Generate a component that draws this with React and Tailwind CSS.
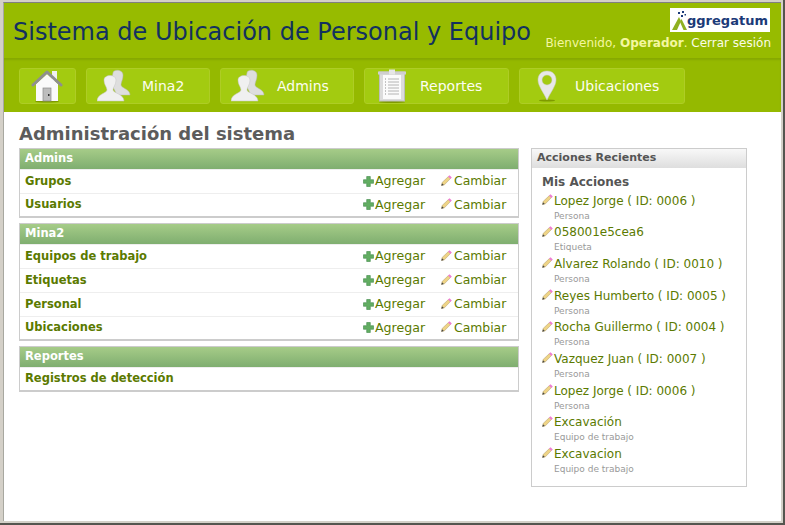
import React from 'react';

function HomeIcon() {
  return (
    <svg width="32" height="34" viewBox="0 0 32 34">
      <ellipse cx="16" cy="32.5" rx="12" ry="1" fill="#7f9a00" />
      <rect x="21" y="2" width="5" height="10" fill="#f0f0f0" />
      <path d="M5 15 L16 5 L27 15 V32 H5 Z" fill="#fafafa" />
      <path d="M2 16 L16 3 L30 16" fill="none" stroke="#8f8f8f" strokeWidth="3" strokeLinecap="round" strokeLinejoin="round" />
      <rect x="12" y="19" width="8" height="13" fill="#bdbdbd" stroke="#8a8a8a" strokeWidth="0.7" />
      <rect x="17" y="25" width="1.5" height="2" fill="#333333" />
    </svg>
  );
}

function UsersIcon() {
  return (
    <svg width="34" height="34" viewBox="0 0 34 34">
      <path d="M16 4 C16 0 26 0 26 6 C26 11 24 13 24 16 C24 19 33 20 33 26 H20 L14 14 Z" fill="#dedede" stroke="#b8b8b8" strokeWidth="0.5" />
      <path d="M7 11 C7 5 19 5 19 11 C19 16 16 18 16 21 C16 24 27 25 27 32 H0 C0 25 10 24 10 21 C10 18 7 16 7 11 Z" fill="#f0f0f0" stroke="#c4c4c4" strokeWidth="0.5" />
    </svg>
  );
}

function ClipboardIcon() {
  return (
    <svg width="28" height="34" viewBox="0 0 28 34">
      <ellipse cx="14" cy="33" rx="13" ry="1" fill="#7f9a00" />
      <rect x="1.5" y="3" width="25" height="29" fill="#dcdcdc" stroke="#bcbcbc" />
      <rect x="0" y="2.5" width="28" height="3" fill="#cfcfcf" />
      <rect x="5" y="6" width="18" height="24" fill="#fbfbfb" />
      <rect x="11" y="0.5" width="6" height="5" fill="#e6e6e6" />
      <path d="M10 10H21M10 13H21M10 16H21M10 19H21M10 22H21M10 25H21" stroke="#b4b4b4" strokeWidth="1" />
      <path d="M7 10H8M7 13H8M7 16H8M7 19H8M7 22H8M7 25H8" stroke="#8c8c8c" strokeWidth="1" />
    </svg>
  );
}

function PinIcon() {
  return (
    <svg width="20" height="32" viewBox="0 0 20 32">
      <ellipse cx="10" cy="30.5" rx="8" ry="1" fill="#7f9a00" />
      <path fillRule="evenodd" d="M10 1 C4 1 1 5 1 10 C1 16 7 23 10 30 C13 23 19 16 19 10 C19 5 16 1 10 1 Z M10 5 A5 5 0 1 1 10 15 A5 5 0 1 1 10 5 Z" fill="#e8e8e8" stroke="#cccccc" strokeWidth="0.5" />
    </svg>
  );
}

function AddIcon() {
  return (
    <svg width="11" height="11" viewBox="0 0 11 11" className="shrink-0">
      <path d="M3.7 0.5H7.3V3.7H10.5V7.3H7.3V10.5H3.7V7.3H0.5V3.7H3.7Z" fill="#62ad62" stroke="#3f8a4a" strokeWidth="0.6" />
    </svg>
  );
}

function PencilIcon() {
  return (
    <svg width="11" height="11" viewBox="0 0 11 11" className="shrink-0 -translate-y-[1px]">
      <path d="M0.6 10.4 L1.2 7.4 L7.4 1.6 L9.4 3.6 L3.4 9.8 Z" fill="#efd486" stroke="#b8a470" strokeWidth="0.6" />
      <path d="M7 1.6 L8.6 0.2 L10.8 2.4 L9.4 4 Z" fill="#ee7ed2" />
      <path d="M0.3 10.7 L1 8.2 L2.8 10 Z" fill="#444444" />
    </svg>
  );
}

function NavItem({ icon, label, widthClass, labelClass }) {
  return (
    <div className={`flex h-[36px] items-center rounded-[3px] border border-[#aecd25] bg-[#a3cb10] text-[14px] text-[#fdfdf0] ${widthClass}`}>
      <div className={`flex h-full items-center ${labelClass}`}>
        {icon}
        {label && <span>{label}</span>}
      </div>
    </div>
  );
}

function ModelRow({ name, actions = true }) {
  return (
    <div className="flex h-[24px] items-center border-t border-[#eeeeee] pl-[5px] first:border-t-0 last:h-[23px]">
      <span className="flex-1 text-[11.5px] font-bold text-[#5b7a00]">{name}</span>
      {actions && (
        <>
          <span className="flex w-[78px] items-center gap-[1px] text-[12.6px] text-[#5b7a00]">
            <AddIcon />
            Agregar
          </span>
          <span className="flex w-[77px] items-center gap-[2px] text-[12.4px] text-[#5b7a00]">
            <PencilIcon />
            Cambiar
          </span>
        </>
      )}
    </div>
  );
}

function ModelGroup({ title, rows, actions }) {
  return (
    <div className="border border-b-2 border-[#cccccc]">
      <div className="flex h-[20px] items-center bg-gradient-to-b from-[#a6cc88] to-[#7fae70] pl-[5px] text-[11.5px] font-bold text-white">
        {title}
      </div>
      {rows.map((name) => (
        <ModelRow key={name} name={name} actions={actions} />
      ))}
    </div>
  );
}

const recent = [
  ['Lopez Jorge ( ID: 0006 )', 'Persona'],
  ['058001e5cea6', 'Etiqueta'],
  ['Alvarez Rolando ( ID: 0010 )', 'Persona'],
  ['Reyes Humberto ( ID: 0005 )', 'Persona'],
  ['Rocha Guillermo ( ID: 0004 )', 'Persona'],
  ['Vazquez Juan ( ID: 0007 )', 'Persona'],
  ['Lopez Jorge ( ID: 0006 )', 'Persona'],
  ['Excavación', 'Equipo de trabajo'],
  ['Excavacion', 'Equipo de trabajo'],
];

export default function App() {
  return (
    <div className="h-[525px] w-[785px] overflow-hidden border-r-2 border-b-2 border-r-[#55554f] border-b-[#55554f] bg-[#d4d0c8] pt-[2px] pl-[3px] font-['DejaVu_Sans',sans-serif]">
      <div className="h-[519px] w-[778px] overflow-hidden border-t border-l border-t-[#808080] border-l-[#a8a8a0] bg-white">
        {/* Header */}
        <header className="flex h-[55px] justify-between bg-[#97bb00] pl-[9px] pr-[10px]">
          <h1 className="pt-[14px] text-[24px] leading-[30px] font-normal text-[#12315f]">
            Sistema de Ubicación de Personal y Equipo
          </h1>
          <div className="flex flex-col items-end pt-[5px]">
            <div className="mr-[1px] flex h-[24px] w-[100px] items-center bg-white pl-[2px]">
              <svg width="15" height="21" viewBox="0 0 15 21" className="shrink-0">
                <path d="M0 20 L7 7 L9 11 L5 20 Z" fill="#8fb020" />
                <path d="M8 12 L9.5 9 L15 20 H11.5 Z" fill="#8fb020" />
                <path d="M6 2h2v2h-2zM10 1h2v2h-2zM9 5h2v2h-2zM12.5 4h1.5v1.5h-1.5z" fill="#1b3a78" />
              </svg>
              <span className="text-[13px] leading-none font-bold text-[#1b3a78]">ggregatum</span>
            </div>
            <div className="mt-[2px] text-[12px] whitespace-nowrap text-[#f4f7a0]">
              Bienvenido, <strong className="font-bold">Operador</strong>. <span className="text-[#fbfde8]">Cerrar sesión</span>
            </div>
          </div>
        </header>

        {/* Nav */}
        <nav className="flex h-[54px] items-start gap-[10px] bg-[#95b900] pt-[10px] pl-[15px] shadow-[inset_0_2px_2px_#86a800]">
          <NavItem icon={<HomeIcon />} widthClass="w-[57px]" labelClass="pl-[11px]" />
          <NavItem icon={<UsersIcon />} label="Mina2" widthClass="w-[124px]" labelClass="gap-[11px] pl-[10px]" />
          <NavItem icon={<UsersIcon />} label="Admins" widthClass="w-[134px]" labelClass="gap-[12px] pl-[10px]" />
          <NavItem icon={<ClipboardIcon />} label="Reportes" widthClass="w-[145px]" labelClass="gap-[14px] pl-[13px]" />
          <NavItem icon={<PinIcon />} label="Ubicaciones" widthClass="w-[166px]" labelClass="gap-[18px] pl-[17px]" />
        </nav>

        {/* Content */}
        <main className="px-[15px] pt-[11px]">
          <h2 className="text-[18px] leading-[22px] font-bold text-[#5c5c5c]">Administración del sistema</h2>
          <div className="mt-[3px] flex items-start gap-[12px]">
            <div className="flex w-[500px] flex-col gap-[5px]">
              <ModelGroup title="Admins" rows={['Grupos', 'Usuarios']} actions />
              <ModelGroup title="Mina2" rows={['Equipos de trabajo', 'Etiquetas', 'Personal', 'Ubicaciones']} actions />
              <ModelGroup title="Reportes" rows={['Registros de detección']} actions={false} />
            </div>
            <aside className="w-[216px] border border-[#cccccc]">
              <div className="flex h-[19px] items-center bg-gradient-to-b from-[#f8f8f8] to-[#dedede] pl-[5px] text-[11px] font-bold text-[#555555]">
                Acciones Recientes
              </div>
              <div className="pt-[6px] pb-[9px] pl-[10px]">
                <h3 className="text-[12px] leading-[16px] font-bold text-[#555555]">Mis Acciones</h3>
                <ul className="mt-[1.6px]">
                  {recent.map(([name, kind], i) => (
                    <li key={i} className="h-[31.67px]">
                      <div className="flex h-[18px] items-center gap-[1px] text-[12px] text-[#5b7a00]">
                        <PencilIcon />
                        {name}
                      </div>
                      <div className="pl-[12px] text-[9px] leading-[12px] text-[#999999]">{kind}</div>
                    </li>
                  ))}
                </ul>
              </div>
            </aside>
          </div>
        </main>
      </div>
    </div>
  );
}
